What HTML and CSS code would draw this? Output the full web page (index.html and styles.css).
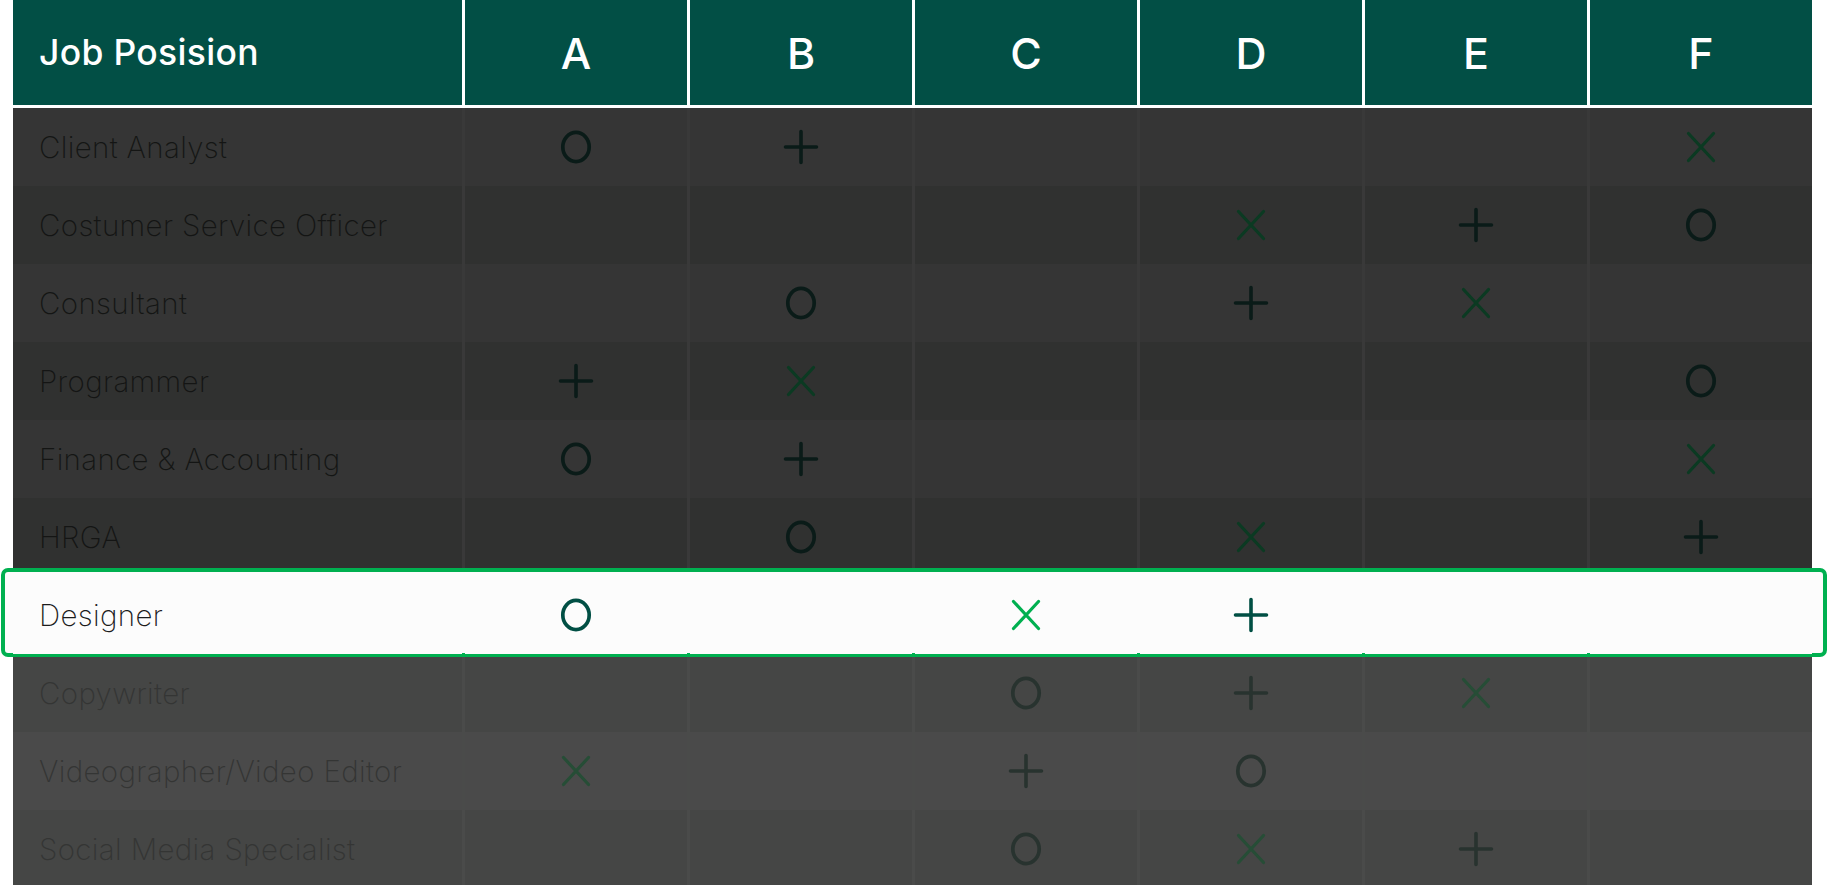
FILE: index.html
```html
<!DOCTYPE html>
<html lang="en">
<head>
<meta charset="utf-8">
<title>Job Position Matrix</title>
<link rel="stylesheet" href="styles.css">
</head>
<body>
<svg class="defs" width="0" height="0" aria-hidden="true">
  <symbol id="i-o" viewBox="0 0 36 36"><ellipse cx="18" cy="18" rx="13.2" ry="14.6" fill="none" stroke="currentColor" stroke-width="3.7"/></symbol>
  <symbol id="i-p" viewBox="0 0 36 36"><path d="M2.5 18H33.5M18 2.5V33.5" fill="none" stroke="currentColor" stroke-width="3.6" stroke-linecap="round"/></symbol>
  <symbol id="i-x" viewBox="0 0 36 36"><path d="M5.5 4.5L30.5 31.5M30.5 4.5L5.5 31.5" fill="none" stroke="currentColor" stroke-width="3.2" stroke-linecap="round"/></symbol>
</svg>

<div class="table">
  <div class="thead">
    <div class="th th-name">Job Posision</div>
    <div class="th">A</div>
    <div class="th">B</div>
    <div class="th">C</div>
    <div class="th">D</div>
    <div class="th">E</div>
    <div class="th">F</div>
  </div>

  <div class="tbody">
    <div class="row top odd">
      <div class="cell name">Client Analyst</div>
      <div class="cell"><svg class="ic o"><use href="#i-o"/></svg></div>
      <div class="cell"><svg class="ic p"><use href="#i-p"/></svg></div>
      <div class="cell"></div>
      <div class="cell"></div>
      <div class="cell"></div>
      <div class="cell"><svg class="ic x"><use href="#i-x"/></svg></div>
    </div>
    <div class="row top even">
      <div class="cell name">Costumer Service Officer</div>
      <div class="cell"></div>
      <div class="cell"></div>
      <div class="cell"></div>
      <div class="cell"><svg class="ic x"><use href="#i-x"/></svg></div>
      <div class="cell"><svg class="ic p"><use href="#i-p"/></svg></div>
      <div class="cell"><svg class="ic o"><use href="#i-o"/></svg></div>
    </div>
    <div class="row top odd">
      <div class="cell name">Consultant</div>
      <div class="cell"></div>
      <div class="cell"><svg class="ic o"><use href="#i-o"/></svg></div>
      <div class="cell"></div>
      <div class="cell"><svg class="ic p"><use href="#i-p"/></svg></div>
      <div class="cell"><svg class="ic x"><use href="#i-x"/></svg></div>
      <div class="cell"></div>
    </div>
    <div class="row top even">
      <div class="cell name">Programmer</div>
      <div class="cell"><svg class="ic p"><use href="#i-p"/></svg></div>
      <div class="cell"><svg class="ic x"><use href="#i-x"/></svg></div>
      <div class="cell"></div>
      <div class="cell"></div>
      <div class="cell"></div>
      <div class="cell"><svg class="ic o"><use href="#i-o"/></svg></div>
    </div>
    <div class="row top odd">
      <div class="cell name">Finance &amp; Accounting</div>
      <div class="cell"><svg class="ic o"><use href="#i-o"/></svg></div>
      <div class="cell"><svg class="ic p"><use href="#i-p"/></svg></div>
      <div class="cell"></div>
      <div class="cell"></div>
      <div class="cell"></div>
      <div class="cell"><svg class="ic x"><use href="#i-x"/></svg></div>
    </div>
    <div class="row top even">
      <div class="cell name">HRGA</div>
      <div class="cell"></div>
      <div class="cell"><svg class="ic o"><use href="#i-o"/></svg></div>
      <div class="cell"></div>
      <div class="cell"><svg class="ic x"><use href="#i-x"/></svg></div>
      <div class="cell"></div>
      <div class="cell"><svg class="ic p"><use href="#i-p"/></svg></div>
    </div>
    <div class="row active">
      <div class="cell name">Designer</div>
      <div class="cell"><svg class="ic o"><use href="#i-o"/></svg></div>
      <div class="cell"></div>
      <div class="cell"><svg class="ic x"><use href="#i-x"/></svg></div>
      <div class="cell"><svg class="ic p"><use href="#i-p"/></svg></div>
      <div class="cell"></div>
      <div class="cell"></div>
    </div>
    <div class="row bottom odd">
      <div class="cell name">Copywriter</div>
      <div class="cell"></div>
      <div class="cell"></div>
      <div class="cell"><svg class="ic o"><use href="#i-o"/></svg></div>
      <div class="cell"><svg class="ic p"><use href="#i-p"/></svg></div>
      <div class="cell"><svg class="ic x"><use href="#i-x"/></svg></div>
      <div class="cell"></div>
    </div>
    <div class="row bottom even">
      <div class="cell name">Videographer/Video Editor</div>
      <div class="cell"><svg class="ic x"><use href="#i-x"/></svg></div>
      <div class="cell"></div>
      <div class="cell"><svg class="ic p"><use href="#i-p"/></svg></div>
      <div class="cell"><svg class="ic o"><use href="#i-o"/></svg></div>
      <div class="cell"></div>
      <div class="cell"></div>
    </div>
    <div class="row bottom odd">
      <div class="cell name">Social Media Specialist</div>
      <div class="cell"></div>
      <div class="cell"></div>
      <div class="cell"><svg class="ic o"><use href="#i-o"/></svg></div>
      <div class="cell"><svg class="ic x"><use href="#i-x"/></svg></div>
      <div class="cell"><svg class="ic p"><use href="#i-p"/></svg></div>
      <div class="cell"></div>
    </div>
  </div>
</div>
</body>
</html>
```

FILE: styles.css
```css
html, body {
  margin: 0;
  padding: 0;
  background: #ffffff;
  overflow: hidden;
}

body {
  font-family: Inter, "Noto Sans", "Liberation Sans", sans-serif;
}

.defs {
  position: absolute;
  width: 0;
  height: 0;
  overflow: hidden;
}

.table {
  margin-left: 13px;
  width: 1799px;
}

.thead,
.row {
  display: grid;
  grid-template-columns: 449px repeat(6, 222px);
  column-gap: 3px;
}

.thead {
  height: 105px;
  background: #ffffff;
}

.th {
  background: #024f45;
  color: #ffffff;
  display: flex;
  align-items: center;
  justify-content: center;
  font-size: 43px;
  font-weight: 500;
}

.th-name {
  justify-content: flex-start;
  padding-left: 26px;
  font-size: 35.5px;
  font-weight: 500;
  letter-spacing: 0.3px;
}

.tbody {
  margin-top: 3px;
}

.row {
  height: 78px;
}

.cell {
  display: flex;
  align-items: center;
  justify-content: center;
}

.name {
  justify-content: flex-start;
  padding-left: 26px;
  font-size: 29.5px;
  font-weight: 250;
  letter-spacing: 0.35px;
}

.ic {
  width: 36px;
  height: 36px;
}

/* upper, dimmed rows */
.row.top { background: #393939; }
.row.top.odd .cell { background: #353535; }
.row.top.even .cell { background: #303130; }
.row.top .name { color: #141514; }
.row.top .o,
.row.top .p { color: #0a1b18; }
.row.top .x { color: #0b3a22; }

/* lower, faded rows */
.row.bottom { background: #4a4b4a; }
.row.bottom.odd .cell { background: #454645; }
.row.bottom.even .cell { background: #4a4a4a; }
.row.bottom .name { color: #343534; }
.row.bottom .o,
.row.bottom .p { color: #28332f; }
.row.bottom .x { color: #264d36; }

/* focused row */
.row.active {
  position: relative;
  z-index: 2;
  background: #f6f6f6;
}

.row.active::before {
  content: "";
  position: absolute;
  top: -8px;
  right: -15px;
  bottom: -3px;
  left: -12px;
  background: #fcfcfc;
  border: 4px solid #00b050;
  border-radius: 7px;
  z-index: -1;
}

.row.active .cell {
  background: #fcfcfc;
}

.row.active .name { color: #1c1c1c; }
.row.active .o,
.row.active .p { color: #014f44; }
.row.active .x { color: #00b050; }
```
